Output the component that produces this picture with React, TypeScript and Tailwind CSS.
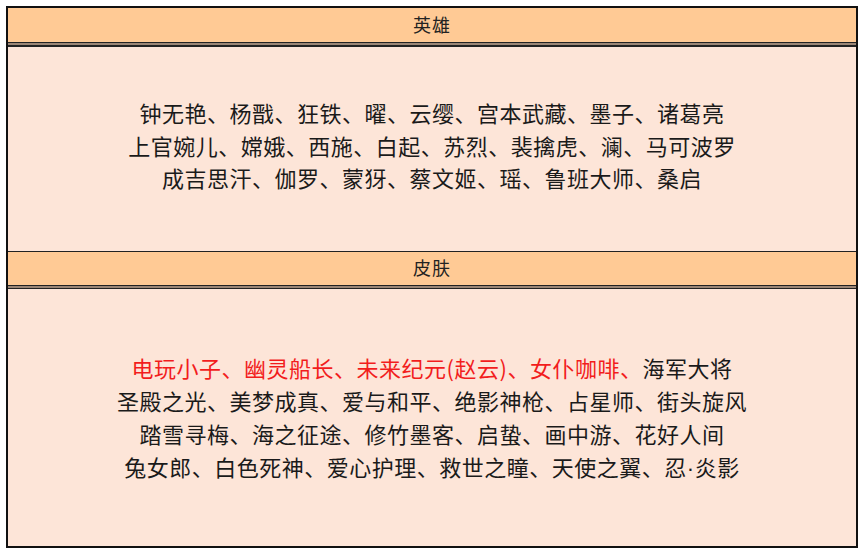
const font = { fontFamily: '"Noto Sans CJK SC", "Microsoft YaHei", sans-serif' };
const latin = { fontFamily: '"Liberation Sans", Arial, sans-serif' };

const heroes = [
  '钟无艳、杨戬、狂铁、曜、云缨、宫本武藏、墨子、诸葛亮',
  '上官婉儿、嫦娥、西施、白起、苏烈、裴擒虎、澜、马可波罗',
  '成吉思汗、伽罗、蒙犽、蔡文姬、瑶、鲁班大师、桑启',
];

const skins = [
  '圣殿之光、美梦成真、爱与和平、绝影神枪、占星师、街头旋风',
  '踏雪寻梅、海之征途、修竹墨客、启蛰、画中游、花好人间',
];

function Header({ title, h }: { title: string; h: string }) {
  return (
    <div className={`${h} bg-[#ffca95] flex items-center justify-center pb-[2px] text-[18px] text-[#222] tracking-[1px]`}>
      {title}
    </div>
  );
}

function DoubleLine() {
  return (
    <div className="flex flex-col">
      <div className="h-px bg-[#222]" />
      <div className="h-[2px] bg-[#9b8676]" />
      <div className="h-[1.5px] bg-[#222]" />
    </div>
  );
}

export default function App() {
  return (
    <div className="w-[865px] h-[555px] bg-white pt-[6px] pl-[6px]" style={font}>
      <div className="w-[852px] h-[542px] border-2 border-[#111] flex flex-col">
        <Header title="英雄" h="h-[34px]" />
        <DoubleLine />
        <div className="h-[204px] bg-[#fde5d8] flex flex-col items-center justify-center pb-[7px] text-[22px] leading-[32.5px] text-[#1a1a1a] tracking-[0.5px]">
          {heroes.map((l) => (
            <p key={l}>{l}</p>
          ))}
        </div>
        <div className="h-px bg-[#222]" />
        <Header title="皮肤" h="h-[33px]" />
        <DoubleLine />
        <div className="flex-1 bg-[#fde5d8] flex flex-col items-center justify-center text-[22px] leading-[33px] text-[#1a1a1a] tracking-[0.5px]">
          <p>
            <span className="text-[#f21d1d]">电玩小子、幽灵船长、未来纪元(赵云)、女仆咖啡、</span>
            海军大将
          </p>
          {skins.map((l) => (
            <p key={l}>{l}</p>
          ))}
          <p>
            兔女郎、白色死神、爱心护理、救世之瞳、天使之翼、忍<span style={latin}>·</span>炎影
          </p>
        </div>
      </div>
    </div>
  );
}
